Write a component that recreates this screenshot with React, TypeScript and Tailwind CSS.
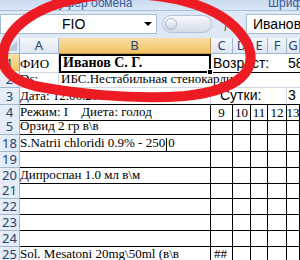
import React from "react";

const COLS = "grid grid-cols-[20px_39px_152px_22px_18px_17px_19px_13px]";
const colHead =
  "flex items-center justify-center border-r border-b border-[#9eb6ce] bg-linear-to-b from-[#f5f8fc] to-[#dde6f2] text-[13px] leading-none text-[#27446c]";
const colHeadOn =
  "flex items-center justify-center border-r border-b border-[#c2994d] bg-linear-to-b from-[#fae0a6] to-[#f2c060] text-[13px] leading-none text-[#27446c]";
const rowHead =
  "flex items-center justify-center border-r border-b border-[#9eb6ce] bg-[#e4ecf7] text-[13px] leading-none text-[#27446c]";
const grid = "border-r border-b border-[#d0d7e5]";
const serif = "font-['Liberation_Serif',serif] text-[13px] text-black leading-none whitespace-nowrap";
const sans = "font-['Liberation_Sans',sans-serif] text-[13px] text-black leading-none whitespace-nowrap";

type TRow = { n: string; h: string; text?: string; c?: string; cursor?: boolean };

const tableRows: TRow[] = [
  { n: "5", h: "h-[16px]", text: "Орзид 2 гр в\\в" },
  { n: "18", h: "h-[17px]", text: "S.Natrii chloridi 0.9% - 250", cursor: true },
  { n: "19", h: "h-[16px]" },
  { n: "20", h: "h-[15px]", text: "Дипроспан 1.0 мл в\\м" },
  { n: "21", h: "h-[16px]" },
  { n: "22", h: "h-[16px]" },
  { n: "23", h: "h-[16px]" },
  { n: "24", h: "h-[16px]" },
  { n: "25", h: "h-[16px]", text: "Sol. Mesatoni 20mg\\50ml (в\\в", c: "##" },
];

function Ribbon() {
  return (
    <div className="flex h-[11px] overflow-hidden border-b border-[#a9c1e0] bg-linear-to-b from-[#c9daf0] to-[#dbe7f6] font-['Liberation_Sans',sans-serif] text-[12px] leading-none text-[#3a5c94]">
      <div className="flex w-[197px] shrink-0 items-end pl-[51px] pb-[1px] whitespace-nowrap">Буфер обмена</div>
      <div className="w-px shrink-0 bg-[#a8bfdc]" />
      <div className="flex flex-1 items-end pl-[70px] pb-[1px] whitespace-nowrap">Шрифт</div>
    </div>
  );
}

function FormulaBar() {
  return (
    <div className="flex h-[27px] items-start bg-[#dfe8f5] pt-[3px] font-['Liberation_Sans',sans-serif]">
      <div className="relative flex h-[20px] w-[157px] shrink-0 items-center border border-[#a5bcd9] bg-white pl-[61px] text-[14px] text-black">
        FIO
        <div className="absolute right-[4px] top-[7px] h-0 w-0 border-x-[4px] border-t-[4px] border-x-transparent border-t-black" />
      </div>
      <div className="ml-[5px] mt-[1px] flex h-[18px] w-[50px] shrink-0 items-center rounded-full border border-[#b3c3d9] bg-linear-to-b from-[#f7f9fc] to-[#d4dce8] pl-[2px]">
        <div className="h-[12px] w-[12px] rounded-full border border-[#a9b8cc] bg-linear-to-b from-white to-[#c8d2e0]" />
      </div>
      <div className="flex h-[20px] w-[34px] shrink-0 items-center justify-center font-['Liberation_Serif',serif] text-[13px] italic text-[#555]">
        fx
      </div>
      <div className="flex h-[20px] min-w-0 flex-1 items-center overflow-hidden border border-r-0 border-[#a5bcd9] bg-white pl-[6px] text-[14px] whitespace-nowrap text-black">
        Иванов С. Г.
      </div>
    </div>
  );
}

function HeaderRow() {
  return (
    <div className={`${COLS} h-[16px]`}>
      <div className="relative border-r border-b border-[#9eb6ce] bg-[#e4ecf7]">
        <div className="absolute bottom-[2px] right-[2px] h-0 w-0 border-b-[10px] border-l-[10px] border-b-[#b8c8dc] border-l-transparent" />
      </div>
      <div className={colHead}>A</div>
      <div className={colHeadOn}>B</div>
      <div className={colHead}>C</div>
      <div className={colHead}>D</div>
      <div className={colHead}>E</div>
      <div className={colHead}>F</div>
      <div className={colHead}>G</div>
    </div>
  );
}

export default function App() {
  return (
    <div className="relative h-[260px] w-[300px] overflow-hidden bg-white">
      <Ribbon />
      <FormulaBar />
      <HeaderRow />

      {/* row 1 */}
      <div className={`${COLS} h-[17px]`}>
        <div className="flex items-center justify-center border-r border-b border-[#c2994d] bg-linear-to-b from-[#fae0a6] to-[#f2c060] text-[13px] leading-none text-[#27446c]">1</div>
        <div className={`${grid} ${serif} flex items-end pb-[2px]`}>ФИО</div>
        <div className={`relative flex items-end border-2 border-black pb-[1px] pl-[2px] ${serif} font-bold text-[14px]`}>
          Иванов С. Г.
          <div className="absolute -bottom-[4px] -right-[4px] h-[6px] w-[6px] border border-white bg-black" />
        </div>
        <div className={`col-span-4 flex items-end border-b border-black pb-[2px] pl-[2px] ${sans} text-[14px]`}>Возраст:</div>
        <div className={`flex items-end border-b border-black pb-[2px] pl-[1px] ${sans} text-[14px]`}>58</div>
      </div>

      {/* row 2 */}
      <div className={`${COLS} h-[17px]`}>
        <div className={rowHead}>2</div>
        <div className={`${grid} ${serif} flex items-end pb-[2px]`}>Ds:</div>
        <div className={`col-span-6 flex items-end border-b border-[#d0d7e5] pb-[2px] pl-[2px] ${serif}`}>
          ИБС.Нестабильная стенокардия.
        </div>
      </div>

      {/* row 3 */}
      <div className={`${COLS} h-[17px]`}>
        <div className={rowHead}>3</div>
        <div className={`col-span-2 flex items-end border-r border-b border-r-[#d0d7e5] border-b-black pb-[2px] ${serif}`}>
          Дата: 12.06.2012
        </div>
        <div className={`col-span-4 flex items-end border-r border-b border-r-[#d0d7e5] border-b-black pb-[2px] pl-[9px] ${sans} text-[14px]`}>
          Сутки:
        </div>
        <div className={`flex items-end border-b border-black pb-[2px] pl-[1px] ${sans} text-[14px]`}>3</div>
      </div>

      {/* row 4 */}
      <div className={`${COLS} h-[14px]`}>
        <div className={rowHead}>4</div>
        <div className={`col-span-2 flex items-end border-r border-b border-black pb-[2px] ${serif} text-[11px]`}>
          Режим: I&nbsp;&nbsp;&nbsp;&nbsp;Диета: голод
        </div>
        {["9", "10", "11", "12", "13"].map((d) => (
          <div key={d} className={`flex items-end justify-center border-r border-b border-black pb-[1px] ${serif} text-[11px]`}>
            {d}
          </div>
        ))}
      </div>

      {tableRows.map((r) => (
        <div key={r.n} className={`${COLS} ${r.h}`}>
          <div className={rowHead}>{r.n}</div>
          <div className={`col-span-2 flex items-end border-r border-b border-black pb-[2px] ${serif}`}>
            {r.text}
            {r.cursor && (
              <>
                <span className="mx-[1px] inline-block h-[13px] w-px translate-y-[2px] bg-black" />0
              </>
            )}
          </div>
          <div className={`flex items-end border-r border-b border-black pb-[2px] pl-[3px] ${serif} text-[11px]`}>{r.c}</div>
          <div className="border-r border-b border-black" />
          <div className="border-r border-b border-black" />
          <div className="border-r border-b border-black" />
          <div className="border-r border-b border-black" />
        </div>
      ))}

      <svg className="pointer-events-none absolute left-0 top-0" width="300" height="260" viewBox="0 0 300 260">
        <path
          d="M 3 58 C 3 30, 35 0, 110 -6 C 175 -8, 230 8, 248 45 C 258 70, 240 90, 185 96 C 130 100, 70 93, 35 86 C 12 80, 3 70, 3 58 Z"
          fill="none"
          stroke="#ed1c24"
          strokeWidth="10"
        />
      </svg>
    </div>
  );
}
